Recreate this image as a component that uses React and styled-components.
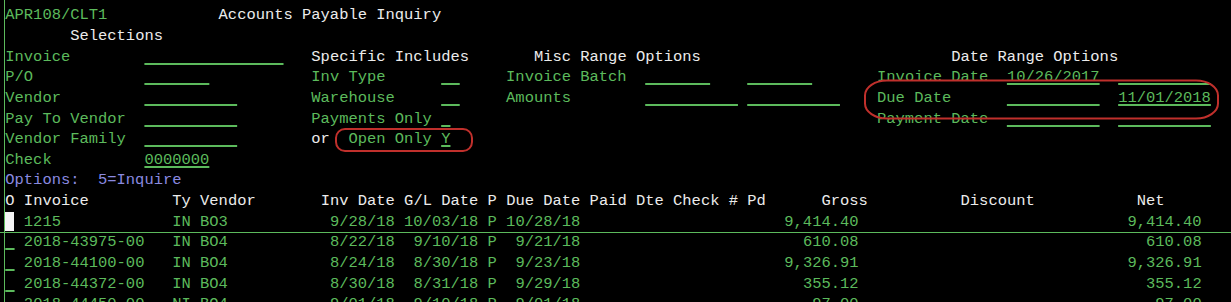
import React from 'react';
import styled, { createGlobalStyle } from 'styled-components';

const GREEN = '#5cba5c';
const WHITE = '#ececec';
const BLUE = '#8a8ae0';
const RED = '#c0302c';

const GlobalStyle = createGlobalStyle`
  html, body { margin: 0; padding: 0; background: #000; }
  #root { background: #000; }
`;

const Screen = styled.div`
  position: relative;
  box-sizing: border-box;
  width: 1231px;
  height: 302px;
  overflow: hidden;
  background: #000;
  padding: 5.3px 0 0 5.3px;
  font-family: "Liberation Mono", "DejaVu Sans Mono", monospace;
  font-size: 15.46px;
  line-height: 20.65px;
  color: ${GREEN};
`;

const Line = styled.div`
  height: 20.65px;
  white-space: pre;
`;

const tones = { g: GREEN, w: WHITE, b: BLUE };

const Text = styled.span`
  color: ${(p) => tones[p.$tone] || GREEN};
`;

const Field = styled.span`
  color: ${GREEN};
  text-decoration-line: underline;
  text-decoration-color: ${GREEN};
  text-decoration-thickness: 2px;
  text-underline-offset: 2px;
  text-decoration-skip-ink: none;
`;

const Cursor = styled.span`
  display: inline-block;
  vertical-align: top;
  width: 8.3px;
  height: 19px;
  margin-right: calc(1ch - 8.3px);
  background: #f4f4f4;
`;

const RuleH = styled.div`
  position: absolute;
  left: 0;
  right: 0;
  top: ${(p) => p.$y}px;
  height: 1px;
  background: ${GREEN};
  pointer-events: none;
`;

const RuleV = styled.div`
  position: absolute;
  top: 0;
  bottom: 0;
  left: ${(p) => p.$x}px;
  width: 1px;
  background: ${GREEN};
  pointer-events: none;
`;

const Marks = styled.svg`
  position: absolute;
  left: 0;
  top: 0;
  pointer-events: none;
`;

const pad = (s, n) => (s + '\u00a0'.repeat(Math.max(0, n - s.length)));

function renderLine(segs) {
  const out = [];
  let pos = 0;
  segs.forEach((s, i) => {
    if (s.c > pos) out.push(' '.repeat(s.c - pos));
    if (s.k === 'field') {
      out.push(<Field key={i}>{pad(s.t || '', s.n)}</Field>);
      pos = s.c + s.n;
    } else if (s.k === 'cursor') {
      out.push(<Cursor key={i} />);
      pos = s.c + 1;
    } else {
      out.push(<Text key={i} $tone={s.tone}>{s.t}</Text>);
      pos = s.c + s.t.length;
    }
  });
  return out;
}

const T = (c, t, tone = 'g') => ({ c, t, tone });
const F = (c, n, t = '') => ({ c, n, t, k: 'field' });

const formLines = [
  [T(0, 'APR108/CLT1'), T(23, 'Accounts Payable Inquiry', 'w')],
  [T(7, 'Selections', 'w')],
  [T(0, 'Invoice'), F(15, 15), T(33, 'Specific Includes', 'w'), T(57, 'Misc Range Options', 'w'), T(102, 'Date Range Options', 'w')],
  [T(0, 'P/O'), F(15, 7), T(33, 'Inv Type'), F(47, 2), T(54, 'Invoice Batch'), F(69, 7), F(80, 7), T(94, 'Invoice Date'), F(108, 10, '10/26/2017'), F(120, 10)],
  [T(0, 'Vendor'), F(15, 10), T(33, 'Warehouse'), F(47, 2), T(54, 'Amounts'), F(69, 10), F(80, 10), T(94, 'Due Date'), F(108, 10), F(120, 10, '11/01/2018')],
  [T(0, 'Pay To Vendor'), F(15, 10), T(33, 'Payments Only'), F(47, 1), T(94, 'Payment Date'), F(108, 10), F(120, 10)],
  [T(0, 'Vendor Family'), F(15, 10), T(33, 'or', 'w'), T(37, 'Open Only'), F(47, 1, 'Y')],
  [T(0, 'Check'), F(15, 7, '0000000')],
  [T(0, 'Options:  5=Inquire', 'b')],
  [
    T(0, 'O', 'w'), T(2, 'Invoice', 'w'), T(18, 'Ty', 'w'), T(21, 'Vendor', 'w'), T(34, 'Inv Date', 'w'),
    T(43, 'G/L Date', 'w'), T(52, 'P', 'w'), T(54, 'Due Date', 'w'), T(63, 'Paid Dte', 'w'), T(72, 'Check #', 'w'),
    T(80, 'Pd', 'w'), T(88, 'Gross', 'w'), T(103, 'Discount', 'w'), T(122, 'Net', 'w'),
  ],
];

const invoices = [
  { cursor: true, inv: '1215', ty: 'IN', vend: 'BO3', invDate: '9/28/18', gl: '10/03/18', p: 'P', due: '10/28/18', gross: '9,414.40', net: '9,414.40' },
  { inv: '2018-43975-00', ty: 'IN', vend: 'BO4', invDate: '8/22/18', gl: '9/10/18', p: 'P', due: '9/21/18', gross: '610.08', net: '610.08' },
  { inv: '2018-44100-00', ty: 'IN', vend: 'BO4', invDate: '8/24/18', gl: '8/30/18', p: 'P', due: '9/23/18', gross: '9,326.91', net: '9,326.91' },
  { inv: '2018-44372-00', ty: 'IN', vend: 'BO4', invDate: '8/30/18', gl: '8/31/18', p: 'P', due: '9/29/18', gross: '355.12', net: '355.12' },
  { inv: '2018-44450-00', ty: 'NI', vend: 'BO4', invDate: '9/01/18', gl: '9/10/18', p: 'P', due: '9/01/18', gross: '97.00', net: '97.00' },
];

const rowSegs = (r) => [
  r.cursor ? { c: 0, k: 'cursor' } : F(0, 1),
  T(2, r.inv), T(18, r.ty), T(21, r.vend),
  T(34, r.invDate.padStart(8)), T(43, r.gl.padStart(8)), T(52, r.p), T(54, r.due.padStart(8)),
  T(84, r.gross.padStart(8)), T(121, r.net.padStart(8)),
];

export default function App() {
  return (
    <>
      <GlobalStyle />
      <Screen>
        {formLines.map((segs, i) => (
          <Line key={i}>{renderLine(segs)}</Line>
        ))}
        {invoices.map((r, i) => (
          <Line key={'r' + i}>{renderLine(rowSegs(r))}</Line>
        ))}
        <RuleH $y={232} />
        <RuleV $x={4} />
        <Marks width="1231" height="302" viewBox="0 0 1231 302">
          <rect x="336" y="129" width="136" height="22" rx="9" ry="9" fill="none" stroke={RED} strokeWidth="2" />
          <rect x="865" y="80.5" width="353" height="38" rx="22" ry="15" fill="none" stroke={RED} strokeWidth="2" />
        </Marks>
      </Screen>
    </>
  );
}
